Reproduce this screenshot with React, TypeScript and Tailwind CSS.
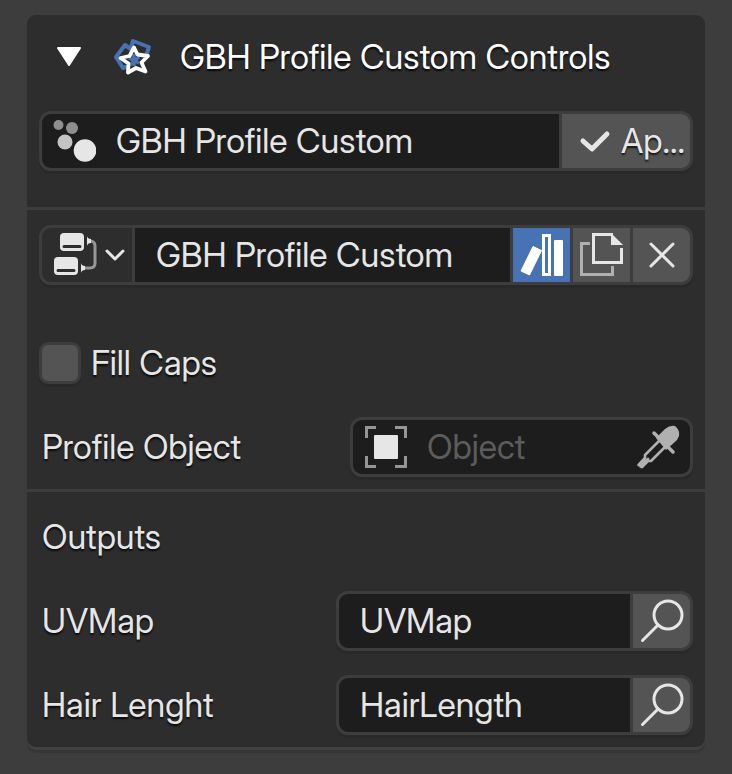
import React from "react";

const box =
  "flex h-[60px] overflow-hidden rounded-[12px] border-[3px] border-[#3d3d3d] bg-[#3d3d3d] gap-[3px] shadow-[0_3px_0_#292929]";
const shade = "[text-shadow:0_2px_2px_rgba(0,0,0,0.8)]";
const iconButton = "flex w-[57px] shrink-0 items-center justify-center bg-[#545454]";

function ParticlesIcon() {
  return (
    <svg width="44" height="44" viewBox="0 0 44 44" className="shrink-0" aria-hidden="true">
      <circle cx="6.5" cy="6" r="5" fill="#8f8f8f" />
      <circle cx="20" cy="9" r="6" fill="#8f8f8f" />
      <circle cx="13" cy="23" r="7.5" fill="#c4c4c4" />
      <circle cx="33" cy="31.5" r="11.3" fill="#e6e6e6" />
    </svg>
  );
}

function GeometryNodesIcon() {
  return (
    <svg width="40" height="40" viewBox="112 37 40 40" className="shrink-0" aria-hidden="true">
      <g fill="none" strokeLinejoin="round">
        <path d="M132 50L125 45L116 57L123 68L129 66" stroke="#4772b3" strokeWidth="4" />
        <path d="M130 50L133 41L149 47L146 56" stroke="#4772b3" strokeWidth="4" />
        <path d="M134 54V66M129 58L139 63M139 57L130 65" stroke="#4772b3" strokeWidth="3.5" />
        <path d="M134 47.5L137.5 54.5L148 56L141.500 62.500L145.500 71.500L136 68L128 72.500L128.500 63.500L120.500 58L129.500 56Z" stroke="#fff" strokeWidth="3.800" />
      </g>
    </svg>
  );
}

function NodeTreeIcon() {
  return (
    <svg width="44" height="44" viewBox="0 0 44 44" className="shrink-0" aria-hidden="true">
      <path d="M36 8H36.500Q41 8.500 41 13V30Q41 35 36 35H29" fill="none" stroke="#969696" strokeWidth="3" />
      <path d="M33 3Q33.500 6 37 6V10Q33.500 10 33 13ZM27 30Q27.500 33 31 33V37Q27.500 37 27 40Z" fill="#e6e6e6" />
      <rect x="6" y="0" width="24" height="18" rx="4" fill="#e6e6e6" />
      <rect x="0" y="24" width="24" height="18" rx="4" fill="#e6e6e6" />
      <path d="M10 13.500H26M4 37.500H20" stroke="#2d2d2d" strokeWidth="3" strokeLinecap="round" />
    </svg>
  );
}

function SearchIcon() {
  return (
    <svg width="44" height="44" viewBox="0 0 44 44" fill="none" stroke="#e6e6e6" strokeWidth="3" strokeLinecap="round" aria-hidden="true">
      <circle cx="28" cy="16" r="14" />
      <path d="M18 26L2.500 41.500" />
    </svg>
  );
}

function Attribute({ id, label, value }: { id: string; label: string; value: string }) {
  return (
    <div className="flex items-center justify-between">
      <label htmlFor={id} className={`pl-[3px] ${shade}`}>{label}</label>
      <div className={`${box} w-[357px]`}>
        <input id={id} defaultValue={value} className="min-w-0 flex-1 bg-[#1d1d1d] pl-[21px] outline-none" />
        <button aria-label={`Search ${label}`} className={iconButton}><SearchIcon /></button>
      </div>
    </div>
  );
}

export default function App() {
  return (
    <main className="min-h-screen bg-[#3d3d3d] px-[27px] pt-[15px] pb-6 font-['Inter_Display','Inter',sans-serif] text-[34px] leading-[42px] text-[#e6e6e6]">
      <section className="rounded-[9px] bg-[#2d2d2d] shadow-[0_3px_0_#414141,0_6px_0_#363636]">
        <header className="flex h-[84px] items-center pl-[30px] text-white">
          <button aria-label="Collapse panel" className="mr-[31px]">
            <svg width="24" height="20" viewBox="0 0 24 20" aria-hidden="true">
              <path d="M1 1H23L12 18Z" fill="#fff" stroke="#fff" strokeWidth="2" strokeLinejoin="round" />
            </svg>
          </button>
          <GeometryNodesIcon />
          <h1 className={`ml-7 whitespace-nowrap ${shade}`}>GBH Profile Custom Controls</h1>
        </header>

        <div className="px-3 pt-3 pb-9">
          <div className={box}>
            <div className="flex min-w-0 flex-1 items-center bg-[#1d1d1d] pl-[10px]">
              <ParticlesIcon />
              <input aria-label="Modifier name" defaultValue="GBH Profile Custom" className="ml-5 min-w-0 flex-1 bg-transparent outline-none" />
            </div>
            <button className={`flex w-[128px] shrink-0 items-center gap-[10px] bg-[#545454] pl-[17px] ${shade}`}>
              <svg width="32" height="24" viewBox="0 0 32 24" className="shrink-0" fill="none" stroke="#e6e6e6" strokeWidth="5" strokeLinecap="round" strokeLinejoin="round" aria-hidden="true">
                <path d="M4 12L13 20L28 5" />
              </svg>
              Ap...
            </button>
          </div>
        </div>

        <div className="border-t-[3px] border-[#3d3d3d] px-3 pt-[15px] pb-3">
          <div className={box}>
            <button aria-label="Browse node groups" aria-haspopup="menu" className="flex w-[90px] shrink-0 items-center gap-[7px] bg-[#2d2d2d] pl-3">
              <NodeTreeIcon />
              <svg width="20" height="12" viewBox="0 0 20 12" fill="none" stroke="#e6e6e6" strokeWidth="3" strokeLinecap="round" strokeLinejoin="round" aria-hidden="true">
                <path d="M2 2L10 10L18 2" />
              </svg>
            </button>
            <input aria-label="Node group name" defaultValue="GBH Profile Custom" className="min-w-0 flex-1 bg-[#1d1d1d] pl-[21px] outline-none" />
            <button aria-label="Fake user" aria-pressed="true" className="flex w-[57px] shrink-0 items-center justify-center bg-[#4772b3]">
              <svg width="44" height="44" viewBox="0 0 44 44" fill="#fff" aria-hidden="true">
                <path d="M13 13.500L21.500 17.500L9.500 42L1 38Z" stroke="#fff" strokeLinejoin="round" />
                <path d="M23.500 2.500H29.500V41.500H23.500Z" fill="none" stroke="#fff" strokeWidth="3" />
                <rect x="34" y="7" width="9" height="36" rx="1" />
              </svg>
            </button>
            <button aria-label="Duplicate node group" className={iconButton}>
              <svg width="44" height="44" viewBox="0 0 44 44" fill="none" strokeWidth="3" aria-hidden="true">
                <path d="M10 10.500H1.500V41.500H32.500V33" stroke="#b0b0b0" />
                <path d="M33 1.500H13.500V29.500H41.500V15" stroke="#e6e6e6" />
                <path d="M31 0L43 12H31Z" fill="#e6e6e6" />
              </svg>
            </button>
            <button aria-label="Unlink node group" className={iconButton}>
              <svg width="26" height="26" viewBox="0 0 26 26" fill="none" stroke="#e6e6e6" strokeWidth="3" strokeLinecap="round" aria-hidden="true">
                <path d="M2 2L24 24M24 2L2 24" />
              </svg>
            </button>
          </div>

          <div className="mt-12 flex h-[60px] items-center gap-[10px]">
            <input id="fill-caps" type="checkbox" className="size-[42px] appearance-none rounded-[9px] border-[3px] border-[#3d3d3d] bg-[#545454] shadow-[0_3px_0_#292929]" />
            <label htmlFor="fill-caps" className={shade}>Fill Caps</label>
          </div>

          <div className="mt-6 flex items-center justify-between">
            <label htmlFor="profile-object" className={`pl-[3px] ${shade}`}>Profile Object</label>
            <div className={`${box} w-[343px]`}>
              <div className="flex min-w-0 flex-1 items-center bg-[#1d1d1d] px-[10px]">
                <svg width="44" height="44" viewBox="0 0 44 44" className="shrink-0" aria-hidden="true">
                  <path d="M13 2.500H3.500V13M32 2.500H42.500V13M13 41.500H3.500V31M32 41.500H42.500V31" fill="none" stroke="#969696" strokeWidth="3" />
                  <rect x="11" y="10" width="24" height="24" rx="1" fill="#e6e6e6" />
                </svg>
                <input id="profile-object" placeholder="Object" className="ml-5 min-w-0 flex-1 bg-transparent outline-none placeholder:text-[#5c5c5c]" />
                <button aria-label="Pick object" className="shrink-0">
                  <svg width="44" height="44" viewBox="0 0 44 44" aria-hidden="true">
                    <path d="M20 13L29 4Q34 0 39 1Q44 5 43 11L41 15L30 25Z" fill="#b0b0b0" />
                    <path d="M18 8L37 27" stroke="#b0b0b0" strokeWidth="3.500" strokeLinecap="round" />
                    <path d="M24 15L9 30V33L2.500 40M30 21L15 36H12L6 42M12 34L4.500 41.500" fill="none" stroke="#b0b0b0" strokeWidth="2.600" strokeLinecap="round" strokeLinejoin="round" />
                  </svg>
                </button>
              </div>
            </div>
          </div>
        </div>

        <div className="flex flex-col gap-6 border-t-[3px] border-[#3d3d3d] px-3 pt-[15px] pb-3">
          <h2 className={`flex h-[60px] items-center pl-[3px] ${shade}`}>Outputs</h2>
          <Attribute id="uv-map" label="UVMap" value="UVMap" />
          <Attribute id="hair-length" label="Hair Lenght" value="HairLength" />
        </div>
      </section>
    </main>
  );
}
